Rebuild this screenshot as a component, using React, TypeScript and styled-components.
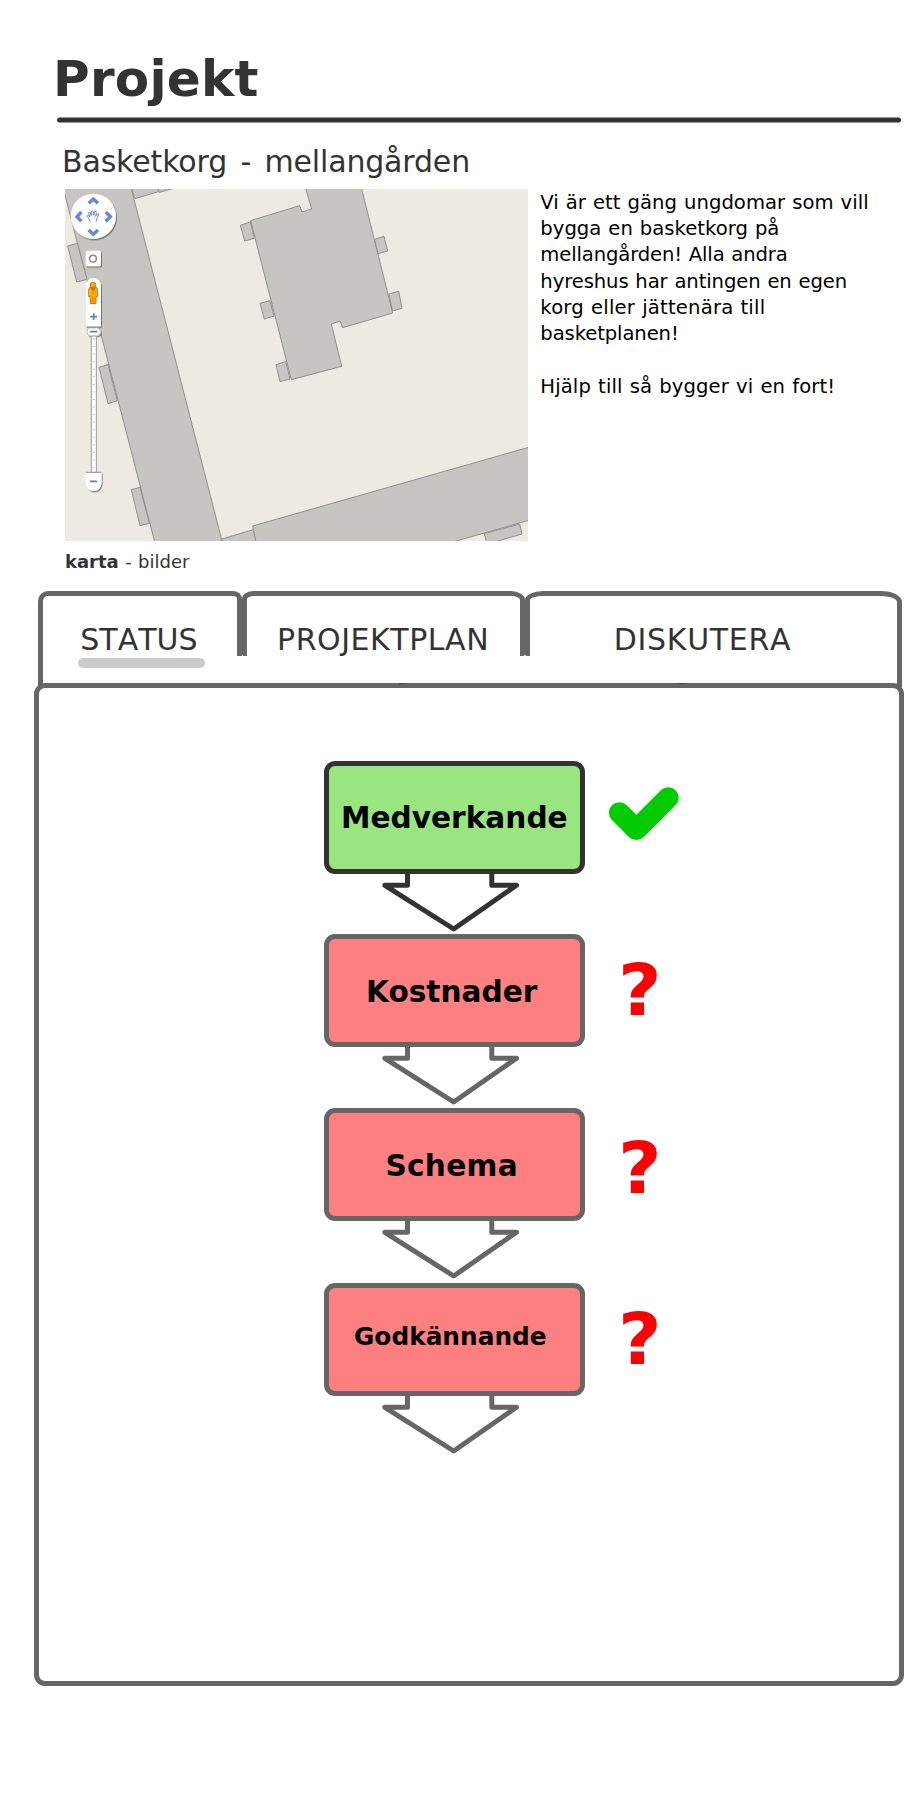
import React from 'react';
import styled, { createGlobalStyle } from 'styled-components';

const GlobalStyle = createGlobalStyle`
  *, *::before, *::after { box-sizing: border-box; }
  body {
    margin: 0;
    background: #fff;
    font-family: Verdana, "DejaVu Sans", sans-serif;
  }
  h1, h2, p { margin: 0; font-weight: normal; }
`;

const Page = styled.main`
  display: flex;
  flex-direction: column;
  width: 912px;
  height: 1800px;
  overflow: hidden;
  background: #fff;
  color: #333;
`;

const Header = styled.header`
  padding: 49px 0 0 57px;
`;

const Title = styled.h1`
  && { font-weight: bold; }
  margin-left: -4px;
  font-size: 50px;
  line-height: 60px;
  letter-spacing: 0.25px;
`;

const Rule = styled.hr`
  width: 844px;
  height: 5px;
  margin: 8px 0 0;
  border: 0;
  border-radius: 3px;
  background: #333;
  transform: translateY(0.4px);
`;

const Subtitle = styled.h2`
  margin-left: 5px;
  padding-top: 22px;
  font-size: 30px;
  line-height: 36px;
  word-spacing: 4px;
  letter-spacing: -0.16px;
`;

const Intro = styled.section`
  display: flex;
  gap: 12.3px;
  height: 411px;
  padding: 9px 0 0 65px;
`;

const MapColumn = styled.div`
  width: 463px;
`;

const MapView = styled.svg`
  display: block;
  width: 463px;
  height: 352px;
`;

const Caption = styled.div`
  margin-top: 9px;
  font-size: 18px;
  line-height: 24px;
  word-spacing: 0.7px;
`;

const Description = styled.p`
  padding-top: 0.8px;
  color: #000;
  font-size: 19.6px;
  line-height: 26.25px;
  word-spacing: 0.7px;
`;

const TextLine = styled.span<{ $spacing?: number }>`
  display: block;
  min-height: 26.25px;
  white-space: nowrap;
  letter-spacing: ${({ $spacing = 0 }) => $spacing}px;
`;

const Tabs = styled.nav`
  display: flex;
  height: 92px;
  padding-left: 38px;
`;

const Tab = styled.div<{
  $width: number;
  $inset: number;
  $radius: string;
  $edge?: 'left' | 'right';
  $spacing?: number;
}>`
  position: relative;
  width: ${({ $width }) => $width}px;
  height: 65px;
  padding: 26px 0 0 ${({ $inset }) => $inset}px;
  border: 5px solid #666;
  border-bottom: 0;
  border-radius: ${({ $radius }) => $radius};
  font-size: 30px;
  line-height: 36px;
  white-space: nowrap;
  font-kerning: none;
  letter-spacing: ${({ $spacing = 0 }) => $spacing}px;

  &::after {
    content: '';
    display: ${({ $edge }) => ($edge ? 'block' : 'none')};
    position: absolute;
    top: 55px;
    ${({ $edge }) => $edge ?? 'left'}: -5px;
    width: 5px;
    height: 36px;
    background: #666;
  }
`;

const ActiveMark = styled.div`
  width: 127px;
  height: 10px;
  margin: 0 0 0 -2px;
  border-radius: 5px;
  background: #ccc;
`;

const Panel = styled.section`
  position: relative;
  display: flex;
  flex-direction: column;
  width: 870px;
  height: 1003px;
  margin-left: 34px;
  padding: 73px 0 0 285px;
  border: 5px solid #666;
  border-radius: 11px;
`;

const Seam = styled.i<{ $left: number; $width: number }>`
  position: absolute;
  top: -5px;
  left: ${({ $left }) => $left}px;
  width: ${({ $width }) => $width}px;
  height: 1px;
  background: #4c4c4c;
`;

const Step = styled.div<{ $height: number }>`
  display: flex;
  height: ${({ $height }) => $height}px;
`;

const StepFlow = styled.div`
  width: 261px;
`;

const StepBox = styled.div<{ $done?: boolean; $size: number; $inset: number; $top: number; $spacing?: number }>`
  width: 261px;
  height: 113px;
  padding: ${({ $top }) => $top}px 0 0 ${({ $inset }) => $inset}px;
  border: 5px solid ${({ $done }) => ($done ? '#333' : '#666')};
  border-radius: 11px;
  background: ${({ $done }) => ($done ? '#99e680' : '#ff8080')};
  color: #000;
  font-size: ${({ $size }) => $size}px;
  font-weight: bold;
  line-height: 40px;
  white-space: nowrap;
  letter-spacing: ${({ $spacing = 0 }) => $spacing}px;
`;

const ArrowSvg = styled.svg`
  display: block;
  width: 261px;
  height: 59px;
`;

const CheckSvg = styled.svg`
  width: 72px;
  height: 56px;
  margin: 25px 0 0 23px;
`;

const Question = styled.div<{ $top: number }>`
  margin: ${({ $top }) => $top}px 0 0 33px;
  height: 80px;
  color: #f00;
  font-size: 71px;
  font-weight: bold;
  line-height: 80px;
  transform: scaleX(1.06);
  transform-origin: left;
`;

function Arrow({ color }: { color: string }) {
  return (
    <ArrowSvg viewBox="324 0 261 59" fill="none" stroke={color} strokeWidth="5" strokeLinejoin="round">
      <path d="M407.5 -3V11.3H384.8L453.7 55L516.5 11.3H491.8V-3" />
    </ArrowSvg>
  );
}

function AreaMap() {
  const ticks = Array.from({ length: 18 }, (_, i) => 462 + i * 22.7);
  return (
    <MapView viewBox="15 12 1389 1056" preserveAspectRatio="none">
      <defs>
        <filter id="shade" x="-20%" y="-20%" width="150%" height="150%">
          <feDropShadow dx="3" dy="4" stdDeviation="2" floodColor="#444" floodOpacity="0.65" />
        </filter>
      </defs>
      <rect x="15" y="12" width="1389" height="1056" fill="#eceae1" />
      <g fill="#c6c5c1" stroke="#90908e" strokeWidth="3">
        <path d="M205 -20L225 41L295 20L293 0Z" />
        <path d="M292 0L297 22L345 9V0Z" />
        <path d="M5 -8L209 -8L485 1064L492 1090H289Z" />
        <path d="M23 183L52 175L81 283L50 291Z" />
        <path d="M117 547L144 539L172 647L144 656Z" />
        <path d="M214 914L240 907L268 1015L240 1022Z" />
        <path d="M485 1062L580 1034L592 1080H490Z" />
        <path d="M578 1023L1420 783V1002L1150 1079H590Z" />
        <path d="M1273 1046L1379 1017L1386 1047L1300 1072H1280Z" />
        <path d="M734 0L755 72L726 81L719 62L572 107L694 584L845 544L814 417L840 408L848 428L998 384L902 0Z" />
        <path d="M541 121L571 111L583 160L554 168Z" />
        <path d="M600 355L630 347L642 393L613 402Z" />
        <path d="M648 539L677 530L690 582L660 590Z" />
        <path d="M944 163L972 154L983 198L954 206Z" />
        <path d="M986 327L1016 319L1026 370L998 378Z" />
      </g>
      <g fill="#fff" filter="url(#shade)">
        <circle cx="100" cy="94" r="68" />
        <rect x="77" y="197" width="46" height="47" rx="5" />
        <path d="M78 425V302A22.5 23 0 0 1 123 302V425Z" />
        <rect x="80" y="429" width="42" height="23" rx="11" />
        <path d="M77 862H125V891Q123 918 101 918Q79 918 77 891Z" />
      </g>
      <g stroke="#9a9a98" strokeWidth="3">
        <rect x="94" y="453" width="15" height="409" fill="#fff" />
        <path d="M79 426H125M77 862H125" />
        {ticks.map((y) => (
          <path key={y} d={`M99 ${y}H104`} stroke="#aaa" strokeWidth="2.5" />
        ))}
      </g>
      <rect x="81" y="429" width="40" height="23" rx="11" fill="#fff" stroke="#a5a5a3" strokeWidth="2" />
      <g fill="none" stroke="#6389d2" strokeWidth="10">
        <path d="M86 55L100 42L114 55" />
        <path d="M86 135L100 148L114 135" />
        <path d="M64 81L51 95L64 109" />
        <path d="M137 81L151 95L137 109" />
      </g>
      <g fill="none" stroke="#5880c8" strokeWidth="5">
        <path d="M91 395H111M101 385V405M90 440H112M90 889H111" />
      </g>
      <path
        d="M91 110L87 102L82 94Q81 90 85 91L90 96L86 84Q86 80 90 82L94 92L94 80Q97 75 100 80L101 91L104 80Q108 77 109 82L107 94L112 87Q117 85 116 90L110 102L108 110"
        fill="#fff"
        stroke="#5077b8"
        strokeWidth="2.5"
        strokeLinejoin="round"
      />
      <circle cx="99" cy="221" r="10" fill="#fff" stroke="#8b8b8b" strokeWidth="4.5" />
      <g fill="#fca800" stroke="#bd6b08" strokeWidth="2.5" strokeLinejoin="round">
        <path d="M89 307H109L113 313V335H108V356H91V335H86V313Z" />
        <circle cx="99" cy="300" r="8.5" />
        <path d="M92 309H107L99 319Z" fill="#ed5a22" stroke="none" />
        <path d="M99 337V355" strokeWidth="2" />
        <path d="M90 315V330" stroke="#ffd34a" />
      </g>
    </MapView>
  );
}

const description: { text: string; spacing?: number }[] = [
  { text: 'Vi är ett gäng ungdomar som vill', spacing: 0.05 },
  { text: 'bygga en basketkorg på', spacing: 0.03 },
  { text: 'mellangården! Alla andra', spacing: -0.13 },
  { text: 'hyreshus har antingen en egen', spacing: -0.09 },
  { text: 'korg eller jättenära till', spacing: 0.2 },
  { text: 'basketplanen!', spacing: -0.1 },
  { text: '' },
  { text: 'Hjälp till så bygger vi en fort!', spacing: 0.13 },
];

const steps = [
  { label: 'Medverkande', done: true, size: 29.6, inset: 12, top: 32, spacing: 0, height: 173, mark: 0 },
  { label: 'Kostnader', done: false, size: 29.6, inset: 37, top: 33, spacing: 0, height: 174, mark: 17 },
  { label: 'Schema', done: false, size: 29.6, inset: 56.4, top: 33, spacing: 0.3, height: 175, mark: 21 },
  { label: 'Godkännande', done: false, size: 24.8, inset: 25, top: 29, spacing: 0, height: 175, mark: 17 },
];

export default function App() {
  return (
    <Page>
      <GlobalStyle />
      <Header>
        <Title>Projekt</Title>
        <Rule />
        <Subtitle>Basketkorg - mellangården</Subtitle>
      </Header>
      <Intro>
        <MapColumn>
          <AreaMap />
          <Caption>
            <b>karta</b> - bilder
          </Caption>
        </MapColumn>
        <Description>
          {description.map((line, i) => (
            <TextLine key={i} $spacing={line.spacing}>
              {line.text}
            </TextLine>
          ))}
        </Description>
      </Intro>
      <Tabs>
        <Tab $width={204} $inset={37.3} $radius="10px 9px 0 0 / 10px 8px 0 0" $edge="left">
          STATUS
          <ActiveMark />
        </Tab>
        <Tab $width={283} $inset={30} $radius="12px 14px 2px 2px / 8px 9px 2px 2px" $spacing={0.55}>
          PROJEKTPLAN
        </Tab>
        <Tab $width={377} $inset={83.7} $radius="18px 21px 0 2px / 9px 11px 0 2px" $edge="right" $spacing={0.7}>
          DISKUTERA
        </Tab>
      </Tabs>
      <Panel>
        <Seam $left={360} $width={6} />
        <Seam $left={638} $width={10} />
        {steps.map((step) => (
          <Step key={step.label} $height={step.height}>
            <StepFlow>
              <StepBox
                $done={step.done}
                $size={step.size}
                $inset={step.inset}
                $top={step.top}
                $spacing={step.spacing}
              >
                {step.label}
              </StepBox>
              <Arrow color={step.done ? '#333' : '#666'} />
            </StepFlow>
            {step.done ? (
              <CheckSvg viewBox="608 786 72 56" fill="none" stroke="#0c0" strokeWidth="21" strokeLinecap="round" strokeLinejoin="round">
                <path d="M619.4 812.7L636.3 829.6L668.2 797.7" />
              </CheckSvg>
            ) : (
              <Question $top={step.mark}>?</Question>
            )}
          </Step>
        ))}
      </Panel>
    </Page>
  );
}
